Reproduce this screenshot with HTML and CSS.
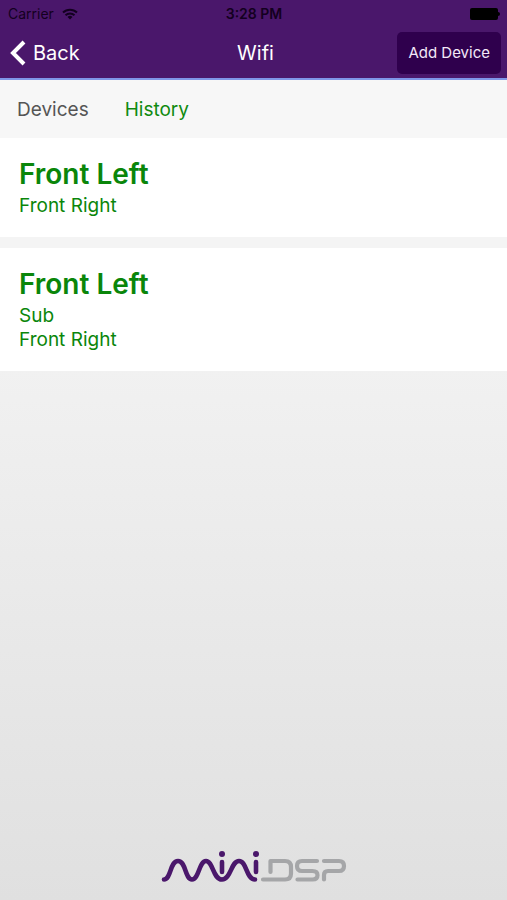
FILE: index.html
```html
<!DOCTYPE html>
<html lang="en">
<head>
    <meta charset="utf-8">
    <meta name="viewport" content="width=device-width, initial-scale=1">
    <title>Wifi</title>
    <link rel="stylesheet" href="styles.css">
</head>
<body>
    <header>
        <div class="status-bar">
            <span class="carrier">
                Carrier
                <svg width="16" height="12" viewBox="0 0 16 12" fill="none" stroke="#130020" stroke-width="2">
                    <path d="M1 4.500a10 10 0 0 1 14 0M3.500 7.200a6.500 6.500 0 0 1 9 0"/>
                    <path d="M8 11.500L5.500 9a3.600 3.600 0 0 1 5 0z" fill="#130020" stroke="none"/>
                </svg>
            </span>
            <span class="time">3:28 PM</span>
            <svg class="battery" width="30" height="12" viewBox="0 0 30 12">
                <rect x="0" y="0" width="28" height="12" rx="2"/>
                <path d="M28 4a2 2 0 0 1 0 4z"/>
            </svg>
        </div>
        <nav class="nav-bar">
            <a class="back" href="#">
                <svg width="16" height="26" viewBox="0 0 16 26" fill="none" stroke="#fff" stroke-width="4">
                    <path d="M14 2L3 13l11 11"/>
                </svg>
                Back
            </a>
            <h1>Wifi</h1>
            <button class="add" type="button">Add Device</button>
        </nav>
    </header>

    <nav class="tabs">
        <a href="#">Devices</a>
        <a class="active" href="#">History</a>
    </nav>

    <main>
        <section class="card">
            <h2>Front Left</h2>
            <p>Front Right</p>
        </section>
        <section class="card">
            <h2>Front Left</h2>
            <p>Sub</p>
            <p>Front Right</p>
        </section>
    </main>

    <footer>
        <svg class="logo" width="188" height="34" viewBox="0 0 188 34" fill="none" stroke-width="4.600" stroke-linecap="round" role="img" aria-label="miniDSP">
            <g stroke="#4a176b">
                <path d="M4 29.500C11 29.500 10 11 18 11S25 29.500 32 29.500S39 11 46 11S53 29.500 62 29.500S71 11 79 11S86 29.500 95 29.500"/>
                <path d="M62 12v10M96 12v10"/>
            </g>
            <g fill="#4a176b">
                <circle cx="62" cy="4" r="3"/>
                <circle cx="96" cy="4" r="3"/>
            </g>
            <g stroke="#a5a6a8" stroke-width="4.200" stroke-linejoin="round">
                <path d="M103 29.500h22q6 0 6-6v-6.500q0-6-6-6h-14.500v11"/>
                <path d="M157 11h-15q-5 0-5 5t5 5h10.500q5 0 5 4.250t-5 4.250h-15"/>
                <path d="M164 11h15q5 0 5 5t-5 5h-11q-4 0-4 4v4.500"/>
            </g>
        </svg>
    </footer>
</body>
</html>
```

FILE: styles.css
```css
* { box-sizing: border-box; }
body {
    display: flex;
    flex-direction: column;
    min-height: 100vh;
    margin: 0;
    font-family: Inter, "Liberation Sans", sans-serif;
    font-size: 19px;
    background: linear-gradient(#f7f7f7 20%, #e0e0e0);
}
h1, h2, p { margin: 0; }
a { text-decoration: none; }

header {
    background: #4a176b;
    border-bottom: 2px solid #7f96e8;
}
.status-bar {
    display: grid;
    grid-template-columns: 1fr auto 1fr;
    align-items: center;
    height: 27px;
    padding: 0 7px 0 8px;
    font-size: 14px;
    color: #130020;
}
.carrier { display: flex; align-items: center; gap: 8px; }
.time { font-weight: 600; }
.battery { justify-self: end; fill: #000; }

.nav-bar {
    display: grid;
    grid-template-columns: 1fr auto 1fr;
    align-items: center;
    height: 51px;
    padding: 0 6px 0 10px;
}
.back {
    display: flex;
    align-items: center;
    gap: 7px;
    font-size: 20px;
    color: #fff;
}
h1 { font-size: 20px; font-weight: 400; color: #fff; }
.add {
    justify-self: end;
    height: 42px;
    padding: 0 11px;
    border: none;
    border-radius: 5px;
    background: #2f004d;
    color: #f3e8f8;
    font-family: inherit;
    font-size: 15px;
}

.tabs {
    display: flex;
    align-items: center;
    gap: 36px;
    height: 58px;
    padding: 0 17px;
    background: #f7f7f7;
}
.tabs a { color: #555; }
.tabs a.active { color: #0f8a0f; }

main {
    display: grid;
    gap: 11px;
    background: #f4f4f4;
}
.card {
    padding: 17px 19px 19px;
    background: #fff;
    color: #0a860a;
}
.card h2 { margin-bottom: 1px; font-size: 28px; line-height: 38px; font-weight: 600; }
.card p { line-height: 24px; }

footer {
    margin-top: auto;
    padding: 0 0 16px;
    text-align: center;
}
.logo { display: block; margin: 0 auto; }
```
